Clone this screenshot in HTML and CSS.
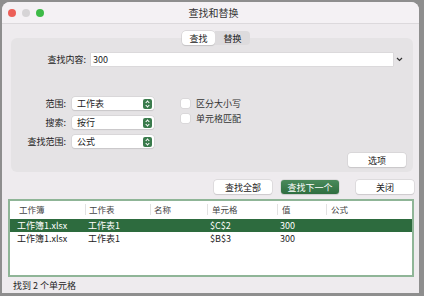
FILE: index.html
```html
<!DOCTYPE html>
<html>
    <head>
        <meta charset="utf-8">
        <title>查找和替换</title>
        <link rel="stylesheet" href="styles.css">
    </head>
    <body>

        <div class="window">

            <div class="titlebar">
                <div class="lights">
                    <span class="light red"></span>
                    <span class="light gray"></span>
                    <span class="light green"></span>
                </div>
                <div class="title">查找和替换</div>
            </div>

            <div class="content">

                <div class="tabs">
                    <div class="tab active">查找</div>
                    <div class="tab">替换</div>
                </div>

                <div class="panel">

                    <div class="find-row">
                        <label class="find-label">查找内容:</label>
                        <div class="input">300</div>
                        <div class="chevron">
                            <svg width="7" height="5" viewBox="0 0 7 5"><path d="M1 1 L3.5 3.5 L6 1" fill="none" stroke="#333" stroke-width="1.2"/></svg>
                        </div>
                    </div>

                    <div class="options">
                        <div class="selects">
                            <div class="select-row">
                                <label>范围:</label>
                                <div class="select"><span>工作表</span><i class="stepper"></i></div>
                            </div>
                            <div class="select-row">
                                <label>搜索:</label>
                                <div class="select"><span>按行</span><i class="stepper"></i></div>
                            </div>
                            <div class="select-row">
                                <label>查找范围:</label>
                                <div class="select"><span>公式</span><i class="stepper"></i></div>
                            </div>
                        </div>
                        <div class="checks">
                            <div class="check"><i class="box"></i>区分大小写</div>
                            <div class="check"><i class="box"></i>单元格匹配</div>
                        </div>
                    </div>

                    <div class="panel-footer">
                        <div class="button options-btn">选项</div>
                    </div>

                </div>

                <div class="actions">
                    <div class="button">查找全部</div>
                    <div class="button primary">查找下一个</div>
                    <div class="button close">关闭</div>
                </div>

                <div class="results">
                    <div class="results-head">
                        <div class="col-1">工作簿</div>
                        <div class="col-2">工作表</div>
                        <div class="col-3">名称</div>
                        <div class="col-4">单元格</div>
                        <div class="col-5">值</div>
                        <div class="col-6">公式</div>
                    </div>
                    <div class="result selected">
                        <div>工作簿1.xlsx</div>
                        <div>工作表1</div>
                        <div></div>
                        <div>$C$2</div>
                        <div>300</div>
                        <div></div>
                    </div>
                    <div class="result">
                        <div>工作簿1.xlsx</div>
                        <div>工作表1</div>
                        <div></div>
                        <div>$B$3</div>
                        <div>300</div>
                        <div></div>
                    </div>
                </div>

                <div class="status">找到 2 个单元格</div>

            </div>

        </div>

    </body>
</html>
```

FILE: styles.css
```css
/** Page **/
html, body {
    margin: 0;
    padding: 0;
}
body {
    width: 424px;
    height: 296px;
    background-color: #8e8e8e;
    font-family: "Noto Sans CJK SC", "Noto Sans", sans-serif;
    font-size: 9px;
    color: #222;
    overflow: hidden;
}

/** Window **/
.window {
    margin: 2px 0 0 2px;
    width: 417px;
    height: 291px;
    background-color: #eeebee;
    border-radius: 8px 8px 0 0;
    overflow: hidden;
}

/** Title bar **/
.titlebar {
    display: flex;
    align-items: center;
    height: 21px;
    background-color: #f4f1f4;
    border-bottom: 1px solid #dcd9dc;
}
.lights {
    display: flex;
    gap: 6px;
    padding-left: 6px;
    width: 80px;
}
.light {
    width: 8px;
    height: 8px;
    border-radius: 50%;
}
.light.red {
    background-color: #ec5f58;
}
.light.gray {
    background-color: #d6d4d6;
}
.light.green {
    background-color: #3dba47;
}
.title {
    flex: 1;
    margin-right: 80px;
    text-align: center;
    font-size: 10px;
    color: #333;
}

/** Content **/
.content {
    padding: 7px 5px 0 6px;
}

/** Tabs **/
.tabs {
    position: relative;
    z-index: 1;
    display: flex;
    justify-content: center;
    height: 14px;
    margin-left: 14px;
    margin-right: 4px;
}
.tab {
    display: flex;
    align-items: center;
    justify-content: center;
    height: 14px;
    padding: 0 6px;
    background-color: #dddbdd;
    color: #222;
    line-height: 1;
}
.tab:first-child {
    border-radius: 4px 0 0 4px;
    padding: 0 7px;
}
.tab:last-child {
    border-radius: 0 4px 4px 0;
    padding: 0 8px 0 9px;
}
.tab.active {
    background-color: #fff;
    box-shadow: 0 0 0 0.5px #c8c6c8, 0 1px 1px rgba(0, 0, 0, 0.15);
    border-radius: 4px;
}

/** Panel **/
.panel {
    margin: -7px 0 0 3px;
    width: 402px;
    box-sizing: border-box;
    padding: 15px 7px 5px 0;
    background-color: #e5e3e5;
    border-radius: 6px;
}
.find-row {
    display: flex;
    align-items: center;
    height: 13px;
}
.find-label {
    width: 75px;
    margin-right: 5px;
    text-align: right;
}
.input {
    flex: 1;
    height: 13px;
    line-height: 13px;
    padding-left: 2px;
    background-color: #fff;
    box-shadow: 0 0 0 0.5px #d2d0d2;
}
.chevron {
    display: flex;
    justify-content: center;
    width: 13px;
}

/** Options **/
.options {
    display: flex;
    margin-top: 31px;
}
.selects {
    display: flex;
    flex-direction: column;
    gap: 6px;
}
.select-row {
    display: flex;
    align-items: center;
}
.select-row label {
    width: 55px;
    margin-right: 6px;
    text-align: right;
}
.select {
    display: flex;
    align-items: center;
    justify-content: space-between;
    width: 82px;
    height: 13px;
    box-sizing: border-box;
    padding: 0 2px 0 5px;
    background-color: #fff;
    border-radius: 3px;
    box-shadow: 0 0 0 0.5px #cfcdcf, 0 0.5px 1px rgba(0, 0, 0, 0.15);
}
.stepper {
    width: 9px;
    height: 10px;
    border-radius: 2px;
    background-color: #3a7b4c;
    position: relative;
}
.stepper::before,
.stepper::after {
    content: "";
    position: absolute;
    left: 3px;
    width: 2px;
    height: 2px;
    border-left: 1px solid #fff;
    border-top: 1px solid #fff;
}
.stepper::before {
    top: 2px;
    transform: rotate(45deg);
}
.stepper::after {
    top: 5px;
    transform: rotate(-135deg);
}
.checks {
    display: flex;
    flex-direction: column;
    gap: 4px;
    margin: 1px 0 0 27px;
}
.check {
    display: flex;
    align-items: center;
    height: 11px;
    color: #333;
}
.box {
    width: 9px;
    height: 9px;
    margin-right: 6px;
    background-color: #fff;
    border-radius: 2px;
    box-shadow: 0 0 0 0.5px #cfcdcf;
}

/** Buttons **/
.panel-footer {
    display: flex;
    justify-content: flex-end;
    margin-top: 5px;
}
.button {
    display: flex;
    align-items: center;
    justify-content: center;
    width: 58px;
    height: 14px;
    background-color: #fff;
    border-radius: 3px;
    box-shadow: 0 0 0 0.5px #d0ced0, 0 0.5px 1px rgba(0, 0, 0, 0.15);
    color: #222;
}
.actions {
    display: flex;
    justify-content: flex-end;
    gap: 9px;
    margin: 8px 0 0 0;
}
.button.primary {
    background: linear-gradient(#4a8a5b, #2f6e40);
    color: #fff;
}
.button.close {
    margin-left: 8px;
}

/** Results **/
.results {
    margin: 5px 0 0 0;
    width: 406px;
    height: 78px;
    box-sizing: border-box;
    background-color: #fff;
    border: 2px solid #8fb597;
}
.results-head {
    display: flex;
    height: 16px;
    align-items: center;
    color: #444;
    font-size: 8.5px;
}
.results-head div {
    height: 11px;
    line-height: 11px;
    border-left: 1px solid #e2e2e2;
    box-sizing: border-box;
}
.results-head .col-1 {
    width: 75px;
    padding-left: 9px;
    border-left: none;
}
.results-head .col-2 {
    width: 65px;
    padding-left: 3px;
}
.results-head .col-3 {
    width: 57px;
    padding-left: 3px;
}
.results-head .col-4 {
    width: 70px;
    padding-left: 4px;
}
.results-head .col-5 {
    width: 49px;
    padding-left: 4px;
}
.results-head .col-6 {
    flex: 1;
    padding-left: 4px;
}
.result {
    display: grid;
    grid-template-columns: 71px 65px 57px 70px 50px 1fr;
    height: 13px;
    line-height: 13px;
    padding-left: 7px;
    color: #222;
}
.results-head + .result {
    margin-top: 2px;
}
.result.selected {
    background-color: #2d6b3e;
    color: #fff;
}

/** Status **/
.status {
    padding: 2px 0 0 5px;
    color: #222;
}
```
